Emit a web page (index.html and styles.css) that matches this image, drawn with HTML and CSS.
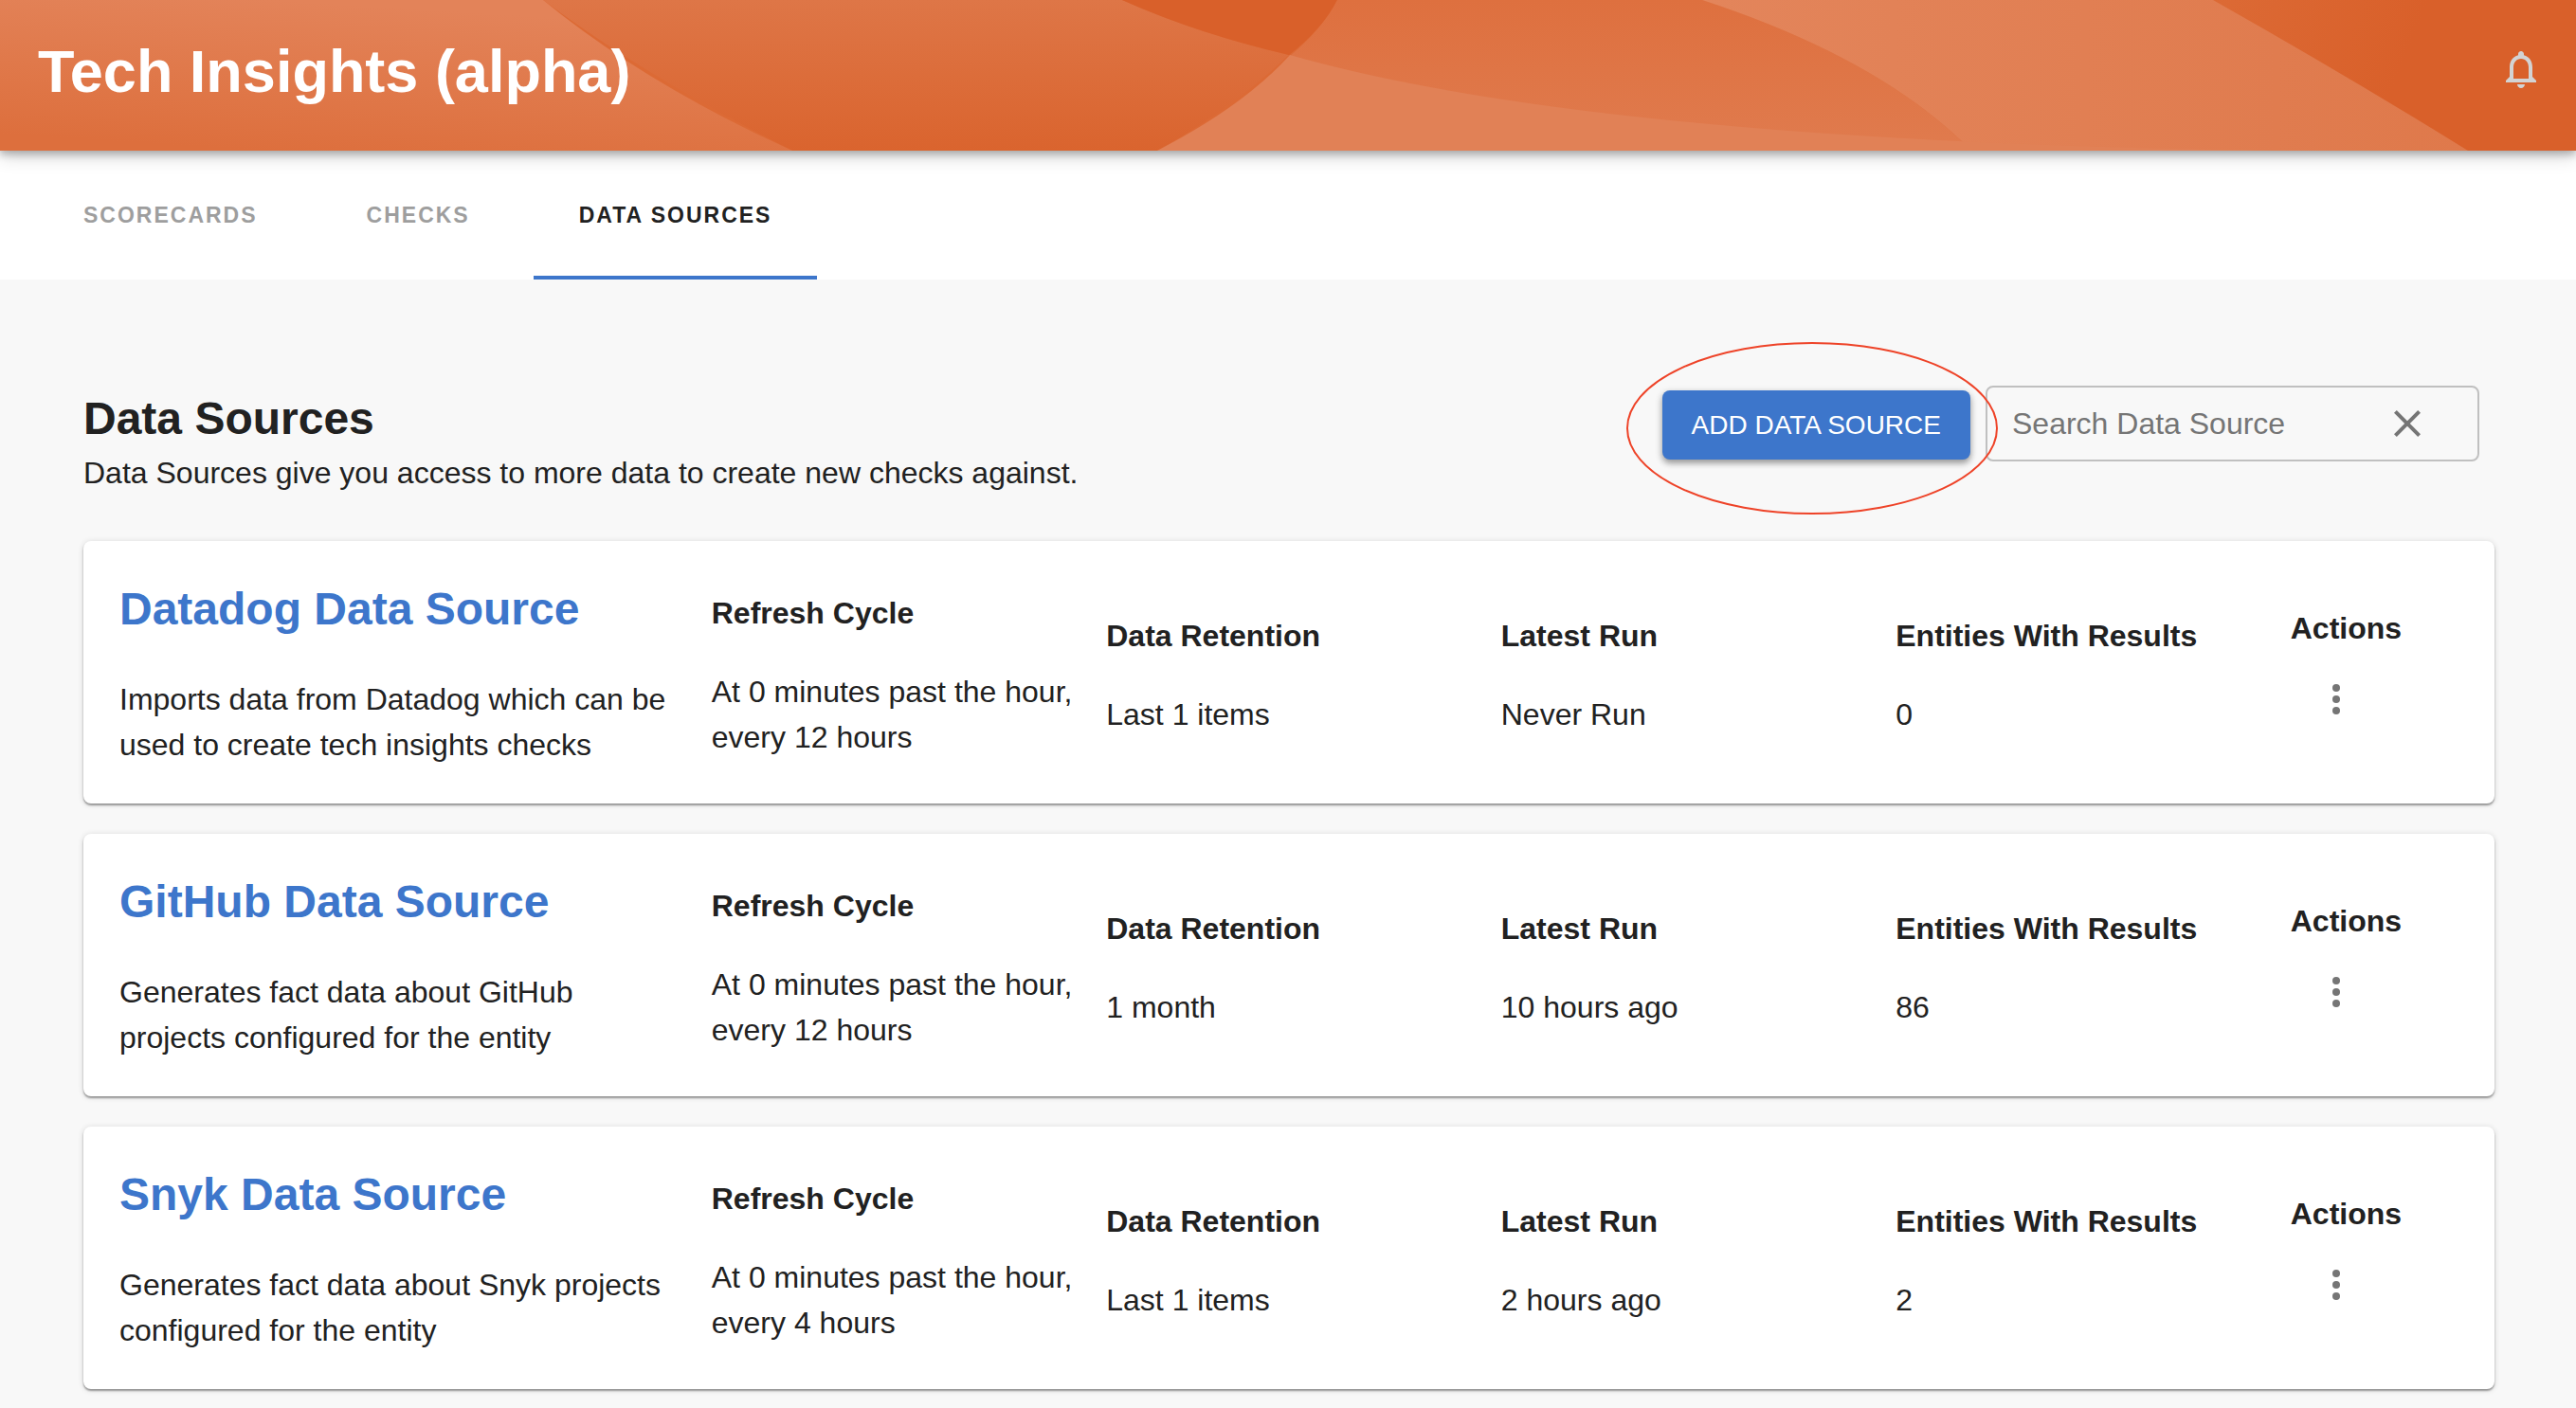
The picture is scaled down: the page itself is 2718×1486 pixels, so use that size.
FILE: index.html
```html
<!DOCTYPE html>
<html lang="en">
<head>
<meta charset="utf-8">
<meta name="viewport" content="width=device-width, initial-scale=1">
<title>Tech Insights (alpha)</title>
<link rel="stylesheet" href="styles.css">
</head>
<body>
<header class="header">
  <svg class="header-art" viewBox="0 0 2718 159" preserveAspectRatio="none" aria-hidden="true">
    <defs>
      <linearGradient id="left" gradientUnits="userSpaceOnUse" x1="290" y1="0" x2="280" y2="159"><stop offset="0" stop-color="#e38359"/><stop offset="1" stop-color="#dd6f3d"/></linearGradient>
      <linearGradient id="mid" x1="0" y1="0" x2="0" y2="1"><stop offset="0" stop-color="#de7647"/><stop offset="1" stop-color="#da642e"/></linearGradient>
      <linearGradient id="center" x1="0" y1="0" x2="0" y2="1"><stop offset="0" stop-color="#de703f"/><stop offset="1" stop-color="#e07b4e"/></linearGradient>
      <linearGradient id="right" x1="0" y1="0" x2="1" y2="0"><stop offset="0" stop-color="#e3855b"/><stop offset="1" stop-color="#df794b"/></linearGradient>
      <linearGradient id="edge" gradientUnits="userSpaceOnUse" x1="2335" y1="0" x2="2530" y2="80"><stop offset="0" stop-color="#dc6a35"/><stop offset="1" stop-color="#d9602a"/></linearGradient>
    </defs>
    <rect width="2718" height="159" fill="url(#edge)"/>
    <path d="M573 0H1184Q1262 35 1360 58Q1300 115 1221 159H836Q680 80 573 0Z" fill="url(#mid)"/>
    <path d="M1184 0Q1262 35 1360 58Q1396 30 1411 0Z" fill="#d9602a"/>
    <path d="M0 0H573Q680 88 836 159H0Z" fill="url(#left)"/>
    <path d="M1411 0H1796Q1985 62 2080 159H1700L1360 60Q1396 30 1411 0Z" fill="url(#center)"/>
    <path d="M1796 0H2335Q2480 82 2604 159H2080Q1985 62 1796 0Z" fill="url(#right)"/>
    <path d="M1361 58Q1680 149 2400 159H1221Q1312 112 1361 58Z" fill="#e18156"/>
  </svg>
  <h1 class="header-title">Tech Insights (alpha)</h1>
  <button class="icon-button bell" type="button" aria-label="Notifications">
    <svg viewBox="0 0 24 24" width="48" height="48" fill="currentColor" aria-hidden="true"><path d="M12 22c1.100 0 2-.900 2-2h-4c0 1.100.900 2 2 2zm6-6v-5c0-3.070-1.630-5.640-4.500-6.320V4c0-.830-.670-1.500-1.500-1.500s-1.500.670-1.500 1.500v.680C7.640 5.360 6 7.920 6 11v5l-2 2v1h16v-1l-2-2zm-2 1H8v-6c0-2.480 1.510-4.500 4-4.500s4 2.020 4 4.500v6z"/></svg>
  </button>
</header>
<nav class="tabs" aria-label="Tech Insights sections">
  <a class="tab" href="#scorecards">Scorecards</a>
  <a class="tab" href="#checks">Checks</a>
  <a class="tab tab-active" href="#data-sources" aria-current="page">Data Sources</a>
</nav>
<main class="content" id="data-sources">
  <div class="toolbar">
    <div class="intro">
      <h2 class="intro-title">Data Sources</h2>
      <p class="intro-text">Data Sources give you access to more data to create new checks against.</p>
    </div>
    <div class="controls">
      <div class="add-wrap">
        <button class="add-button" type="button">Add Data Source</button>
        <svg class="highlight" viewBox="0 0 392 182" aria-hidden="true"><ellipse cx="196" cy="91" rx="195" ry="90"/></svg>
      </div>
      <div class="search">
        <input class="search-input" type="text" placeholder="Search Data Source" aria-label="Search Data Source">
        <button class="icon-button clear" type="button" aria-label="Clear search">
          <svg viewBox="0 0 24 24" width="48" height="48" fill="currentColor" aria-hidden="true"><path d="M19 6.410L17.590 5 12 10.590 6.410 5 5 6.410 10.590 12 5 17.590 6.410 19 12 13.410 17.590 19 19 17.590 13.410 12z"/></svg>
        </button>
      </div>
    </div>
  </div>
  <div class="cards">
    <article class="card">
      <div class="cell">
        <h3 class="card-title"><a href="#datadog">Datadog Data Source</a></h3>
        <p>Imports data from Datadog which can be used to create tech insights checks</p>
      </div>
      <div class="cell"><h4 class="label">Refresh Cycle</h4><p>At 0 minutes past the hour, every 12 hours</p></div>
      <div class="cell"><h4 class="label">Data Retention</h4><p>Last 1 items</p></div>
      <div class="cell"><h4 class="label">Latest Run</h4><p>Never Run</p></div>
      <div class="cell"><h4 class="label">Entities With Results</h4><p>0</p></div>
      <div class="actions"><h4 class="label">Actions</h4>
        <button class="icon-button more" type="button" aria-label="Datadog actions"><svg viewBox="0 0 24 24" width="48" height="48" fill="currentColor" aria-hidden="true"><circle cx="12" cy="6" r="2"/><circle cx="12" cy="12" r="2"/><circle cx="12" cy="18" r="2"/></svg></button>
      </div>
    </article>
    <article class="card">
      <div class="cell">
        <h3 class="card-title"><a href="#github">GitHub Data Source</a></h3>
        <p>Generates fact data about GitHub projects configured for the entity</p>
      </div>
      <div class="cell"><h4 class="label">Refresh Cycle</h4><p>At 0 minutes past the hour, every 12 hours</p></div>
      <div class="cell"><h4 class="label">Data Retention</h4><p>1 month</p></div>
      <div class="cell"><h4 class="label">Latest Run</h4><p>10 hours ago</p></div>
      <div class="cell"><h4 class="label">Entities With Results</h4><p>86</p></div>
      <div class="actions"><h4 class="label">Actions</h4>
        <button class="icon-button more" type="button" aria-label="GitHub actions"><svg viewBox="0 0 24 24" width="48" height="48" fill="currentColor" aria-hidden="true"><circle cx="12" cy="6" r="2"/><circle cx="12" cy="12" r="2"/><circle cx="12" cy="18" r="2"/></svg></button>
      </div>
    </article>
    <article class="card">
      <div class="cell">
        <h3 class="card-title"><a href="#snyk">Snyk Data Source</a></h3>
        <p>Generates fact data about Snyk projects configured for the entity</p>
      </div>
      <div class="cell"><h4 class="label">Refresh Cycle</h4><p>At 0 minutes past the hour, every 4 hours</p></div>
      <div class="cell"><h4 class="label">Data Retention</h4><p>Last 1 items</p></div>
      <div class="cell"><h4 class="label">Latest Run</h4><p>2 hours ago</p></div>
      <div class="cell"><h4 class="label">Entities With Results</h4><p>2</p></div>
      <div class="actions"><h4 class="label">Actions</h4>
        <button class="icon-button more" type="button" aria-label="Snyk actions"><svg viewBox="0 0 24 24" width="48" height="48" fill="currentColor" aria-hidden="true"><circle cx="12" cy="6" r="2"/><circle cx="12" cy="12" r="2"/><circle cx="12" cy="18" r="2"/></svg></button>
      </div>
    </article>
  </div>
</main>
</body>
</html>
```

FILE: styles.css
```css
* { box-sizing: border-box; }

body {
  margin: 0;
  background: #f8f8f8;
  color: #212121;
  font: 32px/48px "Liberation Sans", Arial, sans-serif;
}

h1, h2, h3, h4, p { margin: 0; }

a { color: inherit; text-decoration: none; }

button { font-family: inherit; cursor: pointer; }

.icon-button {
  display: flex;
  align-items: center;
  justify-content: center;
  padding: 0;
  border: 0;
  background: none;
  color: #757575;
}

.header {
  position: relative;
  display: flex;
  align-items: flex-start;
  justify-content: space-between;
  padding: 39px 34px 48px 40px;
  box-shadow: 0 4px 8px rgba(0, 0, 0, 0.24), 0 4px 20px rgba(0, 0, 0, 0.2);
}

.header-art {
  position: absolute;
  inset: 0;
  width: 100%;
  height: 100%;
}

.header-title {
  position: relative;
  color: #fff;
  font-size: 63px;
  line-height: 72px;
}

.header .bell {
  position: relative;
  margin-top: 10px;
  color: #d3d3d3;
}

.tabs {
  display: flex;
  gap: 19px;
  padding-left: 40px;
  background: #fff;
}

.tab {
  padding: 44px 48px 40px;
  border-bottom: 4px solid transparent;
  color: #9e9e9e;
  font-size: 23px;
  font-weight: 700;
  letter-spacing: 2px;
  text-transform: uppercase;
}

.tab-active {
  border-color: #3d76cb;
  color: #212121;
}

.content { padding: 112px 86px 16px 88px; }

.toolbar {
  display: flex;
  align-items: flex-start;
  justify-content: space-between;
  padding-right: 16px;
}

.intro { padding-top: 7px; }

.intro-title {
  margin-bottom: 5px;
  font-size: 48px;
  line-height: 56px;
}

.controls {
  display: flex;
  align-items: center;
  gap: 16px;
}

.add-wrap {
  position: relative;
  padding-top: 3px;
}

.add-button {
  display: block;
  padding: 13px 31px 12px;
  border: 0;
  border-radius: 8px;
  background: #3d76cb;
  box-shadow: 0 4px 6px rgba(0, 0, 0, 0.3), 0 2px 8px rgba(0, 0, 0, 0.15);
  color: #fff;
  font-size: 28px;
  line-height: 48px;
  text-transform: uppercase;
}

.highlight {
  position: absolute;
  top: 50%;
  left: 50%;
  width: 392px;
  height: 182px;
  margin: -86px 0 0 -200px;
  fill: none;
  stroke: #ee4328;
  stroke-width: 2;
  pointer-events: none;
}

.search {
  display: flex;
  align-items: center;
  width: 521px;
  height: 80px;
  padding: 0 50px 0 26px;
  border: 2px solid #c0c0c0;
  border-radius: 8px;
}

.search-input {
  flex: 1;
  min-width: 0;
  padding: 0;
  border: 0;
  outline: 0;
  background: none;
  color: #212121;
  font: inherit;
}

.search-input::placeholder { color: #757575; opacity: 1; }

.cards {
  display: grid;
  gap: 32px;
  margin-top: 48px;
}

.card {
  display: grid;
  grid-template-columns: 3fr 2fr 2fr 2fr 2fr 1fr;
  align-items: center;
  padding: 44px 7px 38px 38px;
  border-radius: 8px;
  background: #fff;
  box-shadow: 0 2px 2px rgba(0, 0, 0, 0.35), 0 1px 6px rgba(0, 0, 0, 0.15);
}

.cell { padding-right: 30px; }

.card-title {
  margin-bottom: 43px;
  color: #3d76cb;
  font-size: 48px;
  line-height: 56px;
}

.label {
  font-size: 32px;
  line-height: 48px;
}

.cell .label { margin-bottom: 35px; }

.actions .label { margin-bottom: 3px; }

.more {
  width: 96px;
  height: 96px;
}
```
